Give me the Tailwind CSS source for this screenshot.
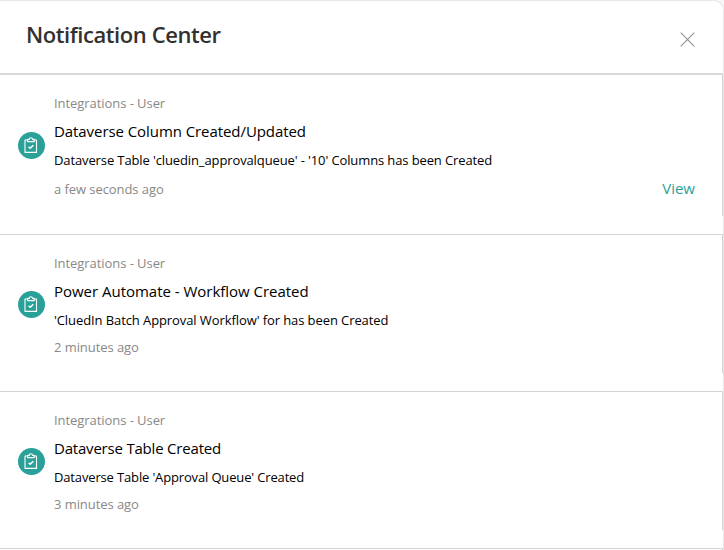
<!DOCTYPE html>
<html lang="en">
<head>
<meta charset="utf-8">
<title>Notification Center</title>
<script src="https://cdn.jsdelivr.net/npm/@tailwindcss/browser@4"></script>
</head>
<body class="bg-[#f7f7f7] h-[550px] overflow-hidden font-['Open_Sans','Noto_Sans',sans-serif]">
<svg class="hidden">
  <symbol id="clipboard" viewBox="0 0 27 27">
    <circle cx="13.5" cy="13.5" r="13.5" fill="#2aa198"/>
    <g fill="none" stroke="#fff" stroke-linejoin="round">
      <path stroke-width="1.1" d="M9.5 8H7v12.4h11.5V8H16"/>
      <path stroke-width="1.1" d="M9.6 9.6V7.4h1.7a1.6 1.6 0 0 1 3.2 0h1.7v2.2z"/>
      <path stroke-width="1.5" d="M10.6 14.9l1.6 1.4 3.1-3"/>
    </g>
  </symbol>
</svg>
<main class="h-[560px] border-t border-r border-[#e8e8e8] rounded-tr-[10px] bg-white overflow-hidden">
  <header class="h-[74px] border-b-2 border-[#d9d9d9] flex justify-between pl-[26px] pr-[28px]">
    <h1 class="mt-[17px] text-[22px] leading-8 font-semibold text-[#323130] whitespace-nowrap tracking-[-0.43px]">Notification Center</h1>
    <svg class="mt-[31px] w-[15px] h-[15px]" viewBox="0 0 15 15" stroke="#8f8f94" stroke-width="1.1" fill="none"><path d="M.7.7l13.6 13.6M14.3.7L.7 14.3"/></svg>
  </header>
  <section class="h-[160px] border-b border-[#d4d4d4]">
    <article class="h-[141px] border-r border-[#d4d4d4] flex pl-[18px] pr-[27px]">
      <svg class="mt-[57px] size-[27px] shrink-0"><use href="#clipboard"/></svg>
      <div class="ml-[9px] grow pt-[18px] whitespace-nowrap">
        <p class="h-[28px] text-[13px] leading-5 tracking-[-0.06px] text-[#8a8886]">Integrations - User</p>
        <p class="h-[29px] text-[15px] leading-5 tracking-[-0.07px] text-black">Dataverse Column Created/Updated</p>
        <p class="h-[29px] text-[13px] leading-5 tracking-[-0.115px] text-black">Dataverse Table 'cluedin_approvalqueue' - '10' Columns has been Created</p>
        <div class="flex justify-between leading-5">
          <p class="text-[13px] leading-5 tracking-[-0.07px] text-[#8a8886]">a few seconds ago</p>
          <a class="-mt-px text-[15px] leading-5 text-[#2aa198]">View</a>
        </div>
      </div>
    </article>
  </section>
  <section class="h-[157px] border-b border-[#d4d4d4]">
    <article class="h-[138px] border-r border-[#d4d4d4] flex pl-[18px]">
      <svg class="mt-[56px] size-[27px] shrink-0"><use href="#clipboard"/></svg>
      <div class="ml-[9px] pt-[18px] whitespace-nowrap">
        <p class="h-[28px] text-[13px] leading-5 tracking-[-0.06px] text-[#8a8886]">Integrations - User</p>
        <p class="h-[29px] text-[15px] leading-5 tracking-[-0.02px] text-black">Power Automate - Workflow Created</p>
        <p class="h-[27px] text-[13px] leading-5 tracking-[-0.09px] text-black">'CluedIn Batch Approval Workflow' for has been Created</p>
        <p class="text-[13px] leading-5 tracking-[-0.07px] text-[#8a8886]">2 minutes ago</p>
      </div>
    </article>
  </section>
  <section class="h-[157px] border-b border-[#d4d4d4]">
    <article class="h-[138px] border-r border-[#d4d4d4] flex pl-[18px]">
      <svg class="mt-[56px] size-[27px] shrink-0"><use href="#clipboard"/></svg>
      <div class="ml-[9px] pt-[18px] whitespace-nowrap">
        <p class="h-[28px] text-[13px] leading-5 tracking-[-0.06px] text-[#8a8886]">Integrations - User</p>
        <p class="h-[29px] text-[15px] leading-5 tracking-[-0.2px] text-black">Dataverse Table Created</p>
        <p class="h-[27px] text-[13px] leading-5 tracking-[-0.15px] text-black">Dataverse Table 'Approval Queue' Created</p>
        <p class="text-[13px] leading-5 tracking-[-0.07px] text-[#8a8886]">3 minutes ago</p>
      </div>
    </article>
  </section>
  <div class="h-10 border-r border-[#d4d4d4]"></div>
</main>
</body>
</html>
